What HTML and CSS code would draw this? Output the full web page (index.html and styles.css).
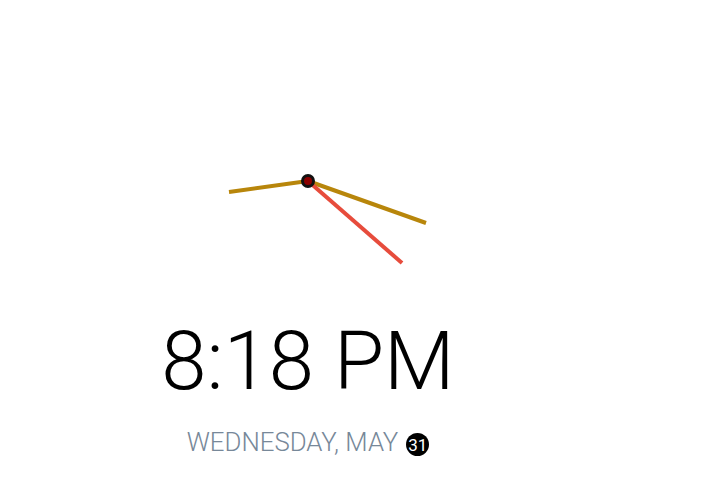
FILE: index.html
```html
<!DOCTYPE html>
<html>
<head>
<meta charset="utf-8">
<link rel="stylesheet" href="styles.css">
</head>
<body>
<div class="app">
  <svg class="clock" width="600" height="290" viewBox="0 0 600 290">
    <line x1="300" y1="173" x2="221" y2="184" class="hand hour"/>
    <line x1="300" y1="173" x2="418" y2="215" class="hand minute"/>
    <line x1="300" y1="173" x2="394" y2="255" class="hand second"/>
    <circle cx="300" cy="173" r="5.5" class="pin"/>
  </svg>
  <div class="time">8:18 PM</div>
  <div class="date">WEDNESDAY, MAY <span class="day">31</span></div>
</div>
</body>
</html>
```
FILE: styles.css
```css
body {
  margin: 8px;
  background: #fff;
  font-family: Roboto, "Noto Sans", sans-serif;
}
.app {
  width: 600px;
  display: flex;
  flex-direction: column;
  align-items: center;
}
.clock {
  display: block;
}
.hand {
  stroke-linecap: butt;
}
.hour, .minute {
  stroke: #b8860b;
  stroke-width: 4;
}
.second {
  stroke: #e74c3c;
  stroke-width: 4;
}
.pin {
  fill: #8b0000;
  stroke: #111;
  stroke-width: 3;
}
.time {
  font-weight: 300;
  font-size: 81.5px;
  line-height: 96px;
  color: #000;
  margin-top: 15px;
}
.date {
  font-weight: 300;
  font-size: 25.8px;
  line-height: 30px;
  color: #778899;
  margin-top: 18px;
  display: flex;
  align-items: center;
  gap: 8px;
}
.day {
  display: inline-flex;
  align-items: center;
  justify-content: center;
  width: 23px;
  height: 23px;
  border-radius: 50%;
  background: #000;
  color: #fff;
  font-size: 17px;
  font-weight: 400;
  margin-top: 5px;
}
```
